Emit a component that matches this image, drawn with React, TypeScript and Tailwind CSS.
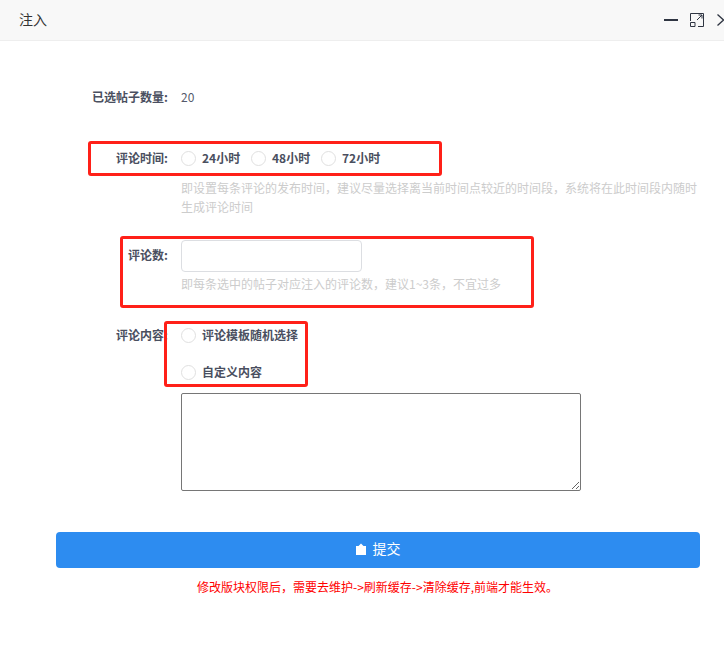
import React from 'react';

const font = { fontFamily: '"Noto Sans CJK SC", "Liberation Sans", sans-serif' };

function Radio({ label, className }: { label: string; className?: string }) {
  return (
    <label className={`flex items-center ${className ?? ''}`}>
      <span className="w-[15px] h-[15px] rounded-full border border-[#e0e0e0] bg-white" />
      <span className="ml-[6px] text-[12px] font-semibold text-[#4a4f60] leading-[20px]">{label}</span>
    </label>
  );
}

function FormRow({ label, children, className, labelClassName }: { label: string; children: React.ReactNode; className?: string; labelClassName?: string }) {
  return (
    <div className={`flex ${className ?? ''}`}>
      <div className={`w-[168px] shrink-0 text-right text-[12px] font-semibold text-[#4a4f60] leading-[20px] ${labelClassName ?? ''}`}>{label}</div>
      <div className="ml-[13px] flex-1 min-w-0 text-[12px] leading-[20px]">{children}</div>
    </div>
  );
}

export default function App() {
  return (
    <div style={font} className="relative w-[724px] h-[647px] overflow-hidden bg-white">
      <header className="h-[41px] bg-[#f8f8f8] border-b border-[#eeeeee] flex items-center pl-[19px]">
        <span className="text-[14px] leading-[20px] -mt-[2px] text-[#333333]">注入</span>
        <div className="ml-auto flex items-center text-[#2f3542]">
          <svg width="14" height="14" viewBox="0 0 14 14" className="mr-[12px]">
            <rect x="0" y="6" width="14" height="2" fill="currentColor" />
          </svg>
          <svg width="14" height="14" viewBox="0 0 14 14" fill="none" stroke="currentColor" strokeWidth="1" className="mr-[13px]">
            <path d="M.5 8V.5h13v13H8M.5 9.500h4.500v4H.5zM7 7l5-5M8.500 2H12v3.500" />
          </svg>
          <svg width="7" height="12" viewBox="0 0 7 12" fill="none" stroke="currentColor" strokeWidth="1.300">
            <path d="M.5.500 6.500 6 .5 11.500" />
          </svg>
        </div>
      </header>

      <main className="pt-[46px]">
        <FormRow label="已选帖子数量:">
          <span className="text-[#555a6b]">20</span>
        </FormRow>

        <FormRow label="评论时间:" className="mt-[41px]">
          <div className="flex">
            <Radio label="24小时" className="w-[70px]" />
            <Radio label="48小时" className="w-[70px]" />
            <Radio label="72小时" />
          </div>
          <p className="mt-[10px] w-[520px] leading-[19px] text-[#cccccc]">
            即设置每条评论的发布时间，建议尽量选择离当前时间点较近的时间段，系统将在此时间段内随时生成评论时间
          </p>
        </FormRow>

        <FormRow label="评论数:" className="mt-[24px]" labelClassName="pt-[5px]">
          <input className="block w-[181px] h-[32px] rounded-[4px] border border-[#dcdee2] bg-white" />
          <p className="mt-[2px] text-[#cccccc]">
            即每条选中的帖子对应注入的评论数，建议1~3条，不宜过多
          </p>
        </FormRow>

        <FormRow label="评论内容:" className="mt-[31px]">
          <div className="flex flex-col gap-[17px]">
            <Radio label="评论模板随机选择" />
            <Radio label="自定义内容" />
          </div>
          <textarea className="block mt-[11px] w-[400px] h-[98px] border border-[#767676] rounded-[2px] bg-white resize" />
        </FormRow>

        <div className="mt-[41px] pl-[56px] pr-[24px]">
          <button className="w-full h-[36px] pb-[3px] rounded-[4px] bg-[#2d8cf0] text-white text-[14px] flex items-center justify-center">
            <svg width="10" height="12" viewBox="0 0 10 12" className="mr-[7px]" fill="currentColor">
              <path d="M0 3h2.500L5 .5 7.500 3H10v9H0z" />
            </svg>
            提交
          </button>
        </div>
        <p className="mt-[10px] pl-[197px] text-[12px] leading-[18px] text-[#ff0000]">
          修改版块权限后，需要去维护-&gt;刷新缓存-&gt;清除缓存,前端才能生效。
        </p>
      </main>

      <div className="absolute left-[88px] top-[141px] w-[354px] h-[35px] border-[3px] border-[#ff2018] rounded-[3px]" />
      <div className="absolute left-[120px] top-[236px] w-[414px] h-[72px] border-[3px] border-[#ff2018] rounded-[3px]" />
      <div className="absolute left-[164px] top-[321px] w-[144px] h-[66px] border-[3px] border-[#ff2018] rounded-[3px]" />
    </div>
  );
}
